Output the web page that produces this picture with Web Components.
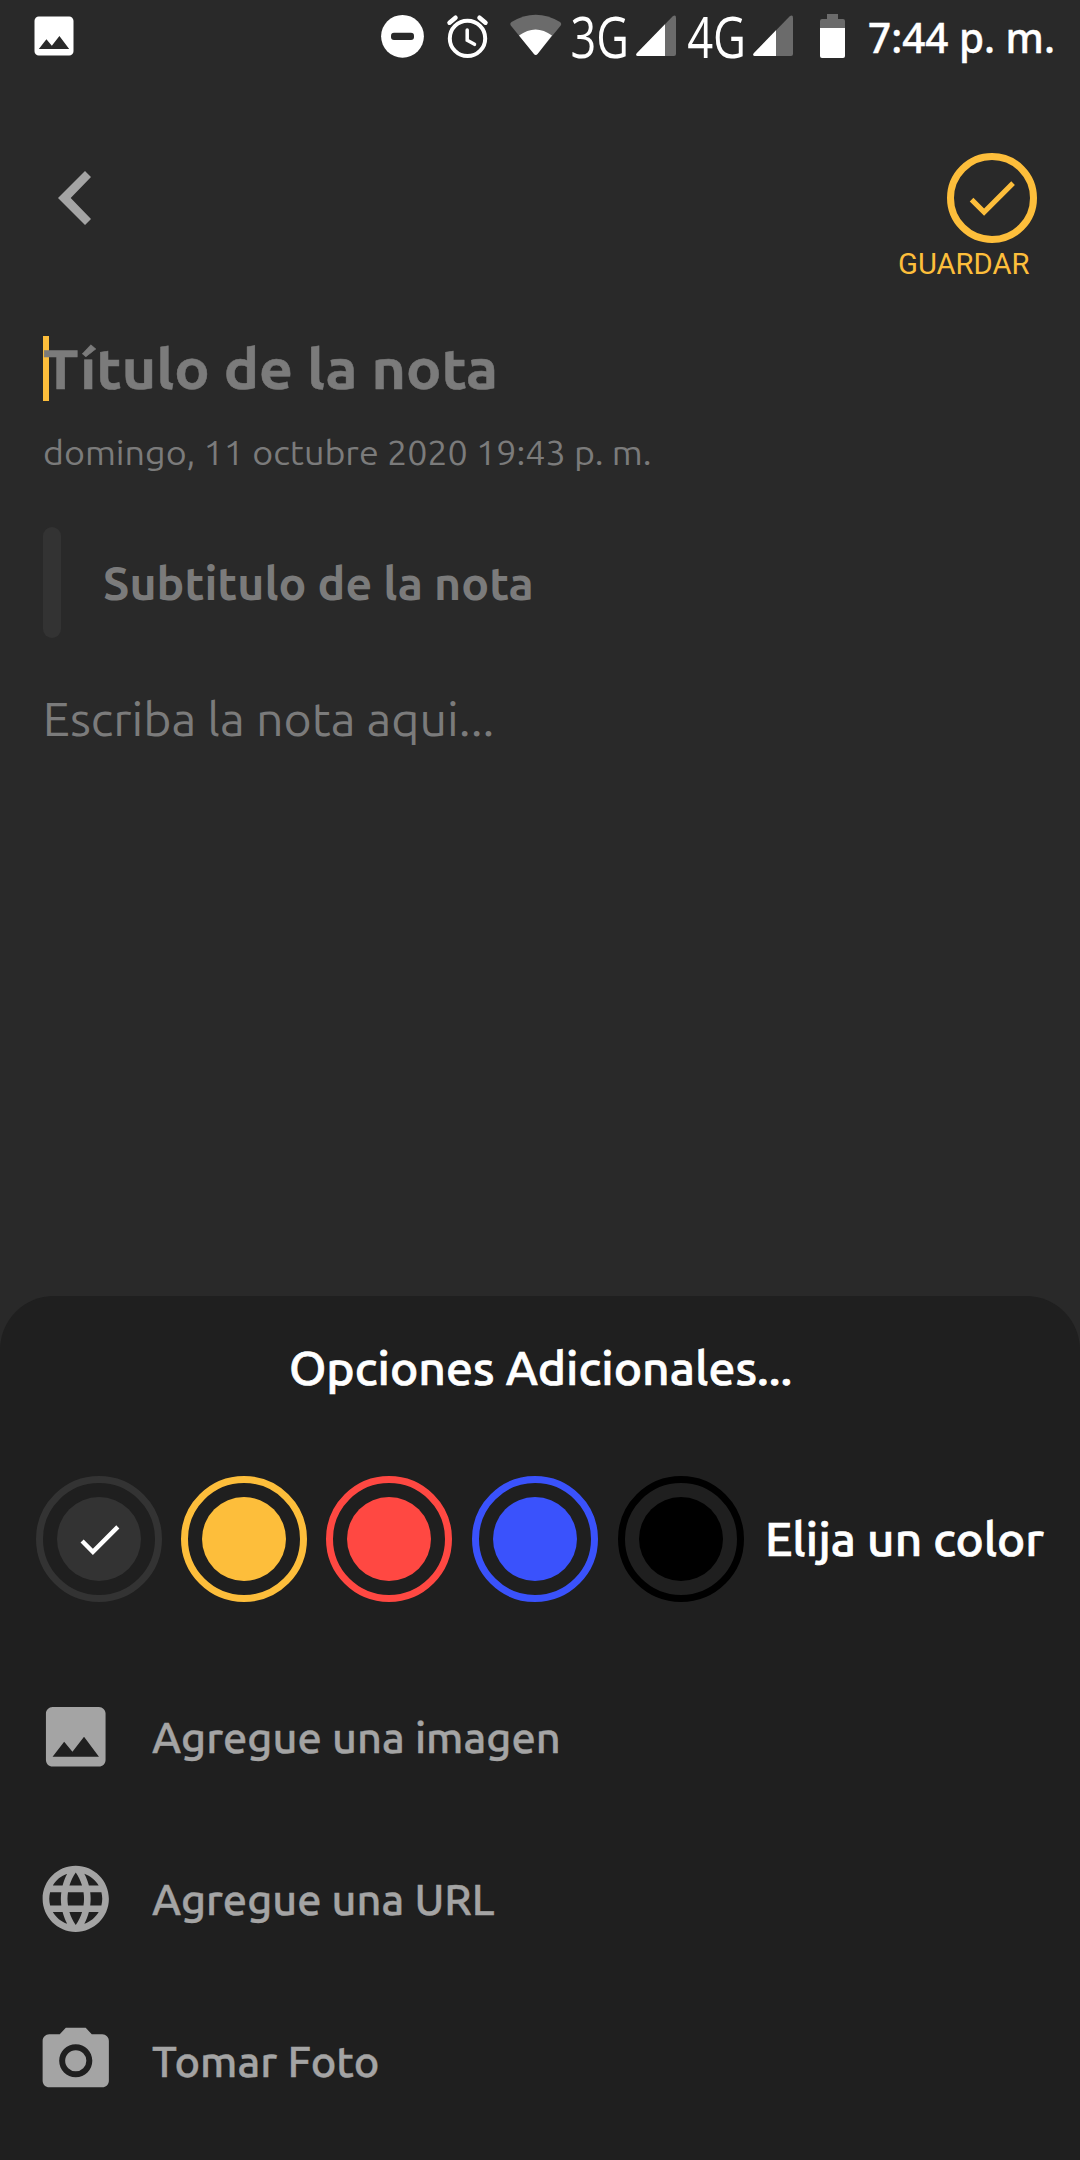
<!DOCTYPE html>
<html lang="es">
<head>
<meta charset="utf-8">
<title>Nota</title>
<style>
html,body{margin:0;background:#292929}
body{width:1080px;height:2160px;overflow:hidden;font-family:Ubuntu,"Noto Sans","Open Sans",sans-serif}
</style>
</head>
<body>
<note-app></note-app>
<script>
const define = (name, html, init) => customElements.define(name, class extends HTMLElement {
  connectedCallback() {
    if (this.shadowRoot) return;
    this.attachShadow({ mode: 'open' }).innerHTML = html;
    if (init) init.call(this, this.shadowRoot);
  }
});

// One line of text, stretched so its ink spans exactly `w` pixels.
define('fit-text', `<style>
  :host{display:block;flex:none;white-space:nowrap}
  span{display:inline-block;transform-origin:0 50%;line-height:inherit;vertical-align:top}
</style><span><slot></slot></span>`, function (root) {
  const s = +this.getAttribute('s'), w = +this.getAttribute('w');
  this.style.fontSize = s + 'px';
  this.style.lineHeight = this.style.height = Math.round(s * 1.4) + 'px';
  this.style.width = w + 'px';
  const ctx = document.createElement('canvas').getContext('2d');
  const cs = getComputedStyle(this);
  ctx.font = `${cs.fontWeight} ${s}px ${cs.fontFamily}`;
  const m = ctx.measureText(this.textContent);
  const k = w / (m.actualBoundingBoxLeft + m.actualBoundingBoxRight);
  root.querySelector('span').style.transform = `translateX(${m.actualBoundingBoxLeft * k}px) scaleX(${k})`;
});

const ICONS = {
  image: 'M21 19V5c0-1.1-.9-2-2-2H5c-1.1 0-2 .9-2 2v14c0 1.1.9 2 2 2h14c1.1 0 2-.9 2-2zM8.5 13.5l2.5 3.01L14.5 12l4.5 6H5l3.5-4.5z',
  check: 'M9 16.17L4.83 12l-1.42 1.41L9 19 21 7l-1.41-1.41z',
  globe: 'M11.99 2C6.47 2 2 6.48 2 12s4.47 10 9.99 10C17.52 22 22 17.52 22 12S17.52 2 11.99 2zm6.93 6h-2.95c-.32-1.25-.78-2.45-1.38-3.56 1.84.63 3.37 1.91 4.33 3.56zM12 4.04c.83 1.2 1.48 2.53 1.91 3.96h-3.82c.43-1.43 1.08-2.76 1.91-3.96zM4.26 14C4.1 13.36 4 12.69 4 12s.1-1.36.26-2h3.38c-.08.66-.14 1.32-.14 2 0 .68.06 1.34.14 2H4.26zm.82 2h2.95c.32 1.25.78 2.45 1.38 3.56-1.84-.63-3.37-1.9-4.33-3.56zm2.95-8H5.08c.96-1.66 2.49-2.93 4.33-3.56C8.81 5.55 8.35 6.75 8.03 8zM12 19.96c-.83-1.2-1.48-2.53-1.91-3.96h3.82c-.43 1.43-1.08 2.76-1.91 3.96zM14.34 14H9.66c-.09-.66-.16-1.32-.16-2 0-.68.07-1.35.16-2h4.68c.09.65.16 1.32.16 2 0 .68-.07 1.34-.16 2zm.25 5.56c.6-1.11 1.06-2.31 1.38-3.56h2.95c-.96 1.65-2.49 2.93-4.33 3.56zM16.36 14c.08-.66.14-1.32.14-2 0-.68-.06-1.34-.14-2h3.38c.16.64.26 1.31.26 2s-.1 1.36-.26 2h-3.38z',
  camera: 'M12 8.8a3.2 3.2 0 1 0 0 6.4 3.2 3.2 0 0 0 0-6.4zM9 2L7.17 4H4c-1.1 0-2 .9-2 2v12c0 1.1.9 2 2 2h16c1.1 0 2-.9 2-2V6c0-1.1-.9-2-2-2h-3.17L15 2H9zm3 15c-2.76 0-5-2.24-5-5s2.24-5 5-5 5 2.24 5 5-2.24 5-5 5z'
};
define('md-icon', `<style>:host{display:block;flex:none}svg{display:block;fill:currentColor}</style>
<svg viewBox="0 0 24 24"><path/></svg>`, function (root) {
  const svg = root.querySelector('svg'), s = this.getAttribute('s');
  svg.setAttribute('width', s);
  svg.setAttribute('height', s);
  root.querySelector('path').setAttribute('d', ICONS[this.getAttribute('name')]);
});

define('signal-icon', `<style>:host{display:block;flex:none;width:40px;height:72px}svg{display:block}</style>
<svg width="40" height="72"><path d="M1.5 56Q-1 55.500 1 53L36.500 16.500Q40 14 40 18V54Q40 56 38 56Z" fill="#6b6b6b"/><path class="on" fill="#fff"/></svg>`, function (root) {
  const x = +this.getAttribute('level');
  root.querySelector('.on').setAttribute('d', `M1.5 56Q-1 55.5 1 53L${x} ${54 - x * 1.03}V56Z`);
});

define('status-bar', `<style>
  :host{display:flex;align-items:center;height:72px;color:#fff;box-sizing:border-box;padding-left:28px}
  svg{display:block;flex:none}
  .net{font-family:"Open Sans","Noto Sans",sans-serif}
  .time{font-family:"Noto Sans","Open Sans",sans-serif;font-weight:500;-webkit-text-stroke:.4px}
</style>
<md-icon name="image" s="52"></md-icon>
<svg style="margin-left:301px" width="43" height="72" viewBox="381 0 43 72"><circle cx="402.5" cy="36.3" r="21.4" fill="#fff"/><rect x="391" y="32.7" width="23" height="7.2" rx="3" fill="#292929"/></svg>
<svg style="margin-left:22px" width="44" height="72" viewBox="446 0 44 72" fill="none" stroke="#fff" stroke-linecap="round"><circle cx="467.500" cy="38.400" r="17.700" stroke-width="4"/><path d="M449.500 22.700L455.500 17.700M485.500 22.700L479.500 17.700" stroke-width="4.500"/><path d="M467.200 30V40.300L474.500 44.300" stroke-width="3.500"/></svg>
<svg style="margin-left:20px" width="52" height="72" viewBox="510 0 52 72"><path d="M510.800 25.500Q509.500 23.500 511.500 22Q535.700 7.500 560 22Q562 23.500 560.700 25.500L537.500 54Q535.700 56 534 54Z" fill="#6b6b6b"/><path d="M519 35.500Q535.700 23.500 552 35.500L537.500 54Q535.700 56.200 534 54Z" fill="#fff"/></svg>
<fit-text class="net" style="margin:0 .8px 0 10.300px" s="56.5" w="53.6">3G</fit-text>
<signal-icon level="29" style="margin-left:9.3px"></signal-icon>
<fit-text class="net" style="margin:0 .8px 0 11.700px" s="56.5" w="54.8">4G</fit-text>
<signal-icon level="23" style="margin-left:9.7px"></signal-icon>
<svg style="margin-left:27px" width="25" height="72" viewBox="820 0 25 72"><path d="M827 14H838V19H843Q845 19 845 21V28H820V21Q820 19 822 19H827Z" fill="#6b6b6b"/><path d="M820 28H845V56Q845 58 843 58H822Q820 58 820 56Z" fill="#fff"/></svg>
<fit-text class="time" style="margin-left:23.7px" s="42.5" w="183.500">7:44 p. m.</fit-text>`);

define('save-button', `<style>
  :host{display:flex;flex-direction:column;align-items:flex-end;color:#fdbe3b;font-family:Roboto,sans-serif}
  .ring{flex:none;width:90px;height:90px;border:7px solid;border-radius:50%;box-sizing:border-box;display:flex;align-items:center;justify-content:center}
  fit-text{margin:1px 7.7px 0 0}
</style>
<div class="ring"><md-icon name="check" s="61.6"></md-icon></div>
<fit-text s="29" w="130.600">GUARDAR</fit-text>`);

define('app-header', `<style>
  :host{display:flex;justify-content:space-between;height:168px;padding:81px 43px 0 58px;box-sizing:border-box}
  .back{margin-top:18px;display:block}
</style>
<svg class="back" width="33" height="54"><path d="M27 0L33 6L12.700 27L33 48L27 54L0 27Z" fill="#a4a4a4"/></svg>
<save-button></save-button>`);

define('note-editor', `<style>
  :host{display:flex;flex-direction:column;color:#7b7b7b;padding-left:43px;height:1056px;box-sizing:border-box}
  .title{position:relative;display:flex;align-items:center;height:65px;margin-top:96px;padding-left:1px;font-weight:700}
  .caret{position:absolute;left:0;top:0;width:6px;height:65px;background:#fdbe3b}
  .title fit-text{position:relative;-webkit-text-stroke:.5px}
  .date{margin:28px 0 0 1.300px}
  .sub{display:flex;align-items:center;height:111px;margin-top:50px;gap:43.300px;font-weight:600}
  .bar{width:18px;height:111px;border-radius:9px;background:#333}
  .body{margin:49px 0 0 3.700px}
</style>
<div class="title"><i class="caret"></i><fit-text s="56" w="450.5">Título de la nota</fit-text></div>
<fit-text class="date" s="34.6" w="606">domingo, 11 octubre 2020 19:43 p. m.</fit-text>
<div class="sub"><i class="bar"></i><fit-text s="47" w="427.2">Subtitulo de la nota</fit-text></div>
<fit-text class="body" s="46" w="445">Escriba la nota aqui...</fit-text>`);

define('color-dot', `<style>
  :host{display:flex;flex:none;width:126px;height:126px;box-sizing:border-box;border:7px solid var(--c);border-radius:50%;align-items:center;justify-content:center;color:#fff}
  div{width:84px;height:84px;border-radius:50%;background:var(--c);display:flex;align-items:center;justify-content:center}
</style><div><slot></slot></div>`, function () {
  this.style.setProperty('--c', this.getAttribute('color'));
});

define('option-row', `<style>
  :host{display:flex;align-items:center;height:162px;padding-left:36px;gap:36px;color:#a4a4a4;font-weight:500;-webkit-text-stroke:.4px}
</style><slot></slot>`);

define('options-sheet', `<style>
  :host{display:block;height:864px;background:#1f1f1f;border-radius:54px 54px 0 0;color:#fff;font-weight:500;overflow:hidden}
  .head{display:flex;justify-content:center;padding-top:40px;-webkit-text-stroke:.7px}
  .colors{display:grid;grid-template-columns:145px 145px 146px 146px 150px auto;justify-content:start;align-items:center;height:126px;padding-left:36px;margin-top:76px}
  .colors fit-text{margin-top:-1px;-webkit-text-stroke:.7px}
  .rows{margin-top:54px}
</style>
<div class="head"><fit-text s="46" w="499">Opciones Adicionales...</fit-text></div>
<div class="colors">
  <color-dot color="#333333"><md-icon name="check" s="53"></md-icon></color-dot>
  <color-dot color="#fdbe3b"></color-dot>
  <color-dot color="#ff4842"></color-dot>
  <color-dot color="#3a52fc"></color-dot>
  <color-dot color="#000000"></color-dot>
  <fit-text s="46" w="276">Elija un color</fit-text>
</div>
<div class="rows">
  <option-row><md-icon name="image" s="79.5"></md-icon><fit-text s="42" w="406.500">Agregue una imagen</fit-text></option-row>
  <option-row><md-icon name="globe" s="79.5"></md-icon><fit-text s="42" w="342.500">Agregue una URL</fit-text></option-row>
  <option-row><md-icon name="camera" s="79.5"></md-icon><fit-text s="42" w="225.500">Tomar Foto</fit-text></option-row>
</div>`);

define('note-app', `<style>:host{display:flex;flex-direction:column;width:1080px;height:2160px;background:#292929}</style>
<status-bar></status-bar><app-header></app-header><note-editor></note-editor><options-sheet></options-sheet>`);
</script>
</body>
</html>
